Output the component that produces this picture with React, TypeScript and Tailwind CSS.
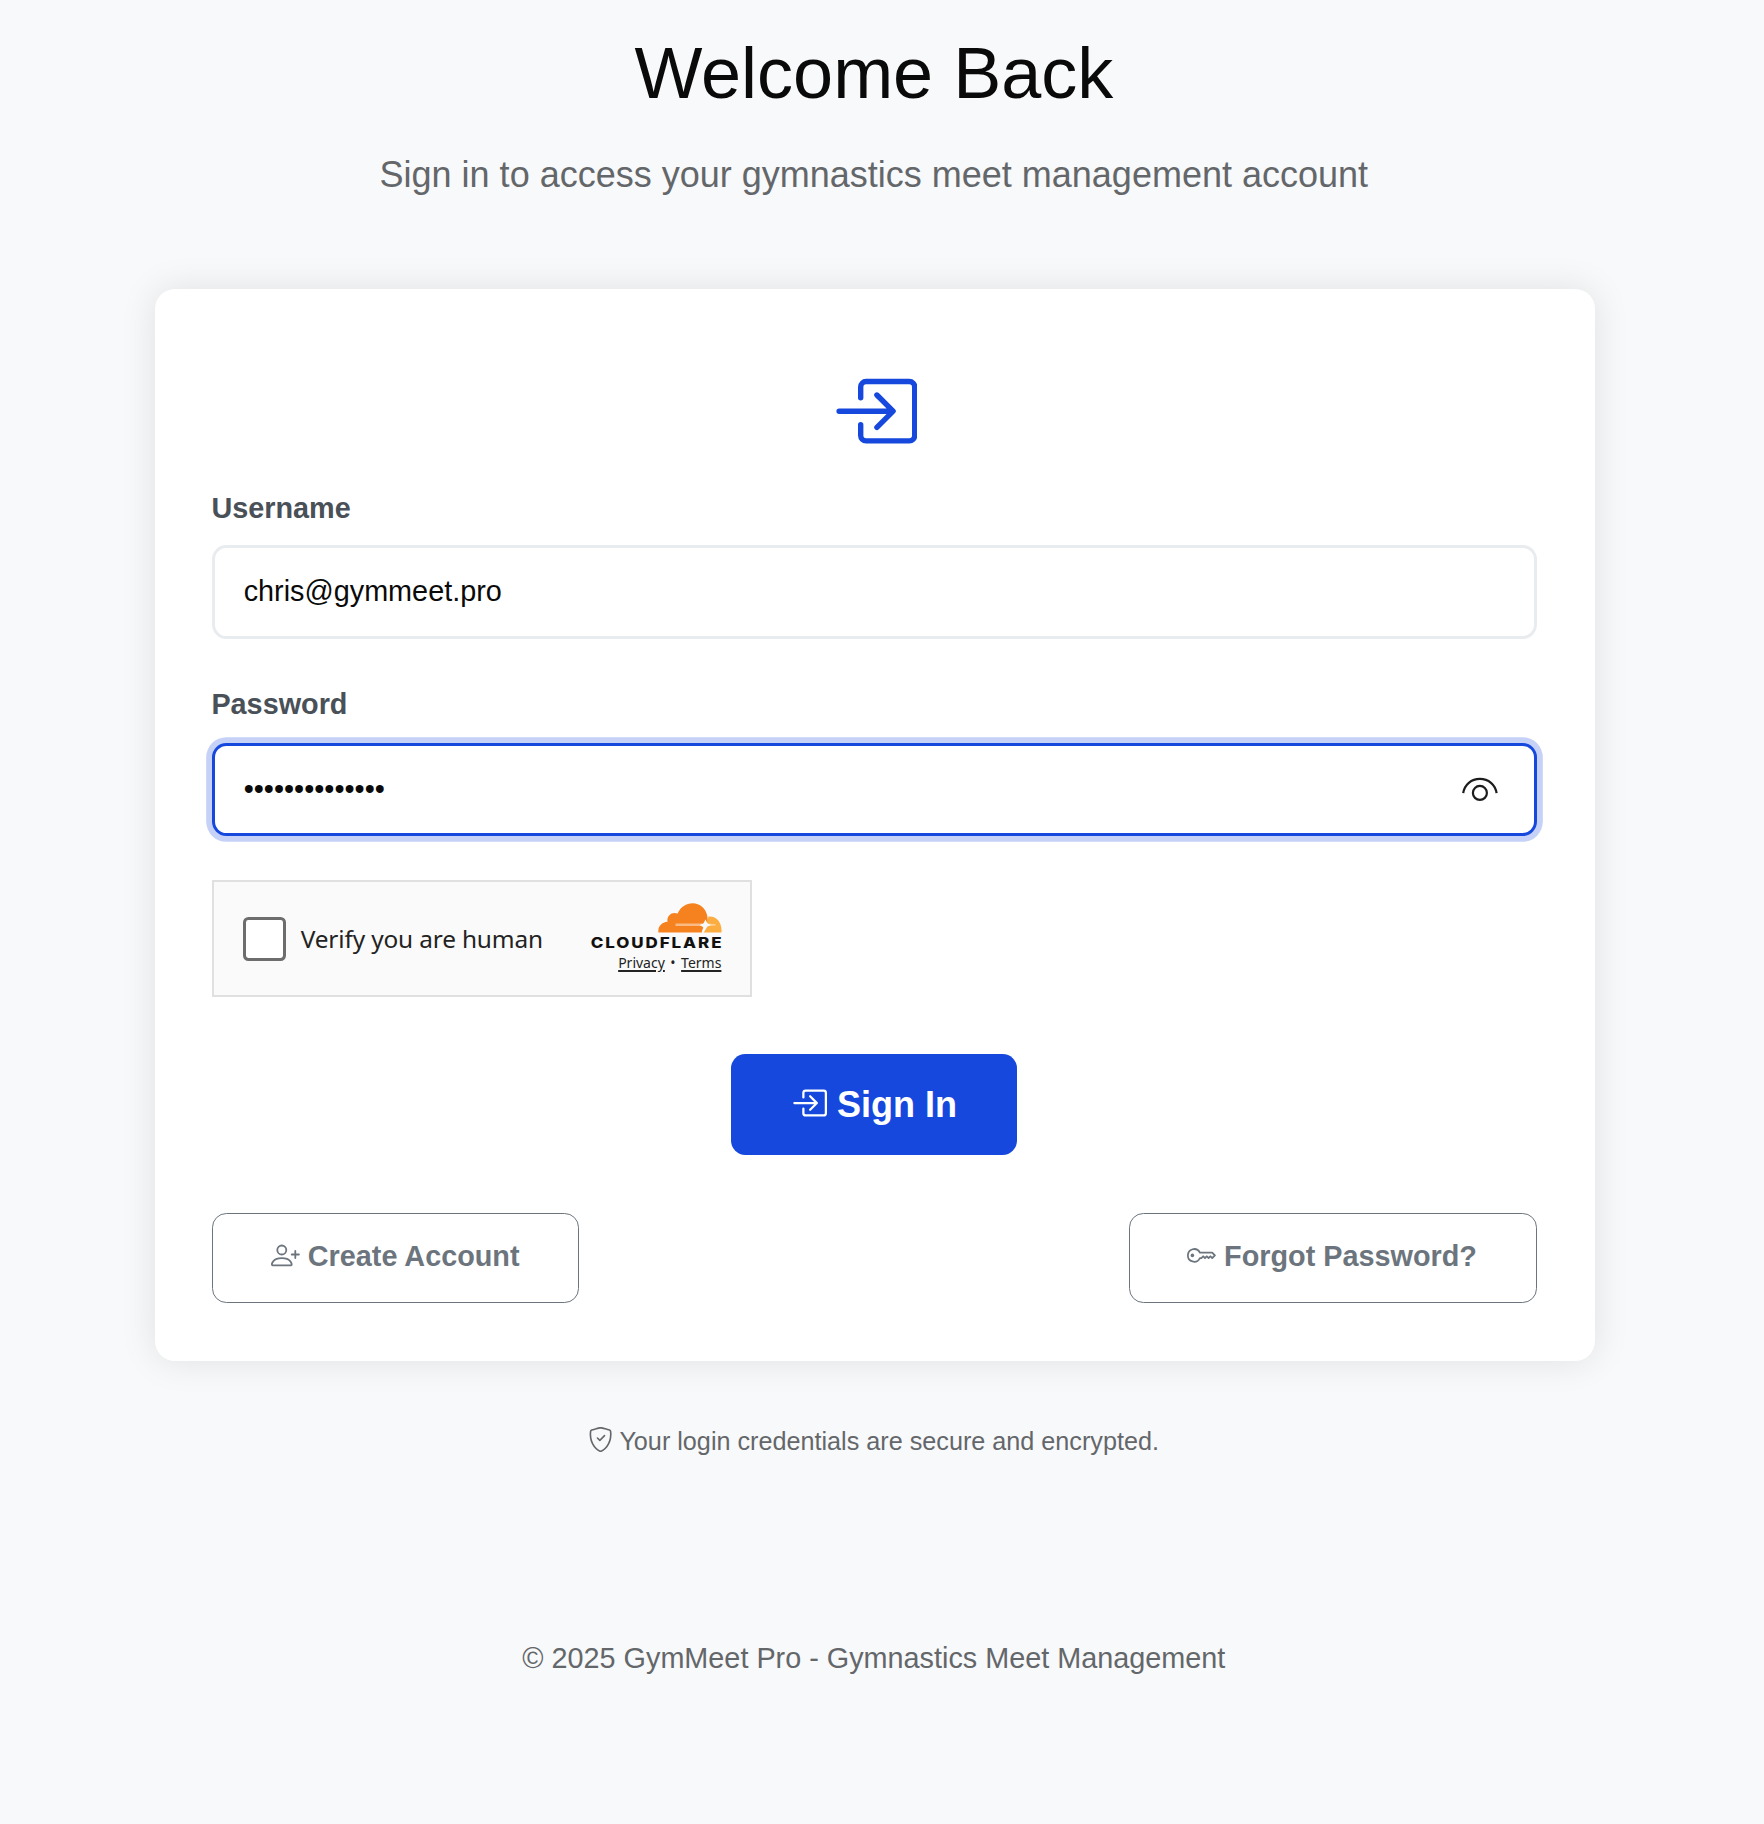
import { BsBoxArrowInRight, BsKey, BsPersonPlus, BsShieldCheck } from "react-icons/bs";

function RevealIcon() {
  return (
    <svg width="36" height="25" viewBox="0 0 36 25" fill="none" stroke="#1c1c1c" strokeWidth="2.2">
      <path d="M1.200 16.2C2.4 7.6 9.4 1.9 17.9 1.9S33.4 7.6 34.6 16.2" />
      <circle cx="17.9" cy="15.9" r="7" />
    </svg>
  );
}

function CloudLogo() {
  return (
    <svg width="64" height="30" viewBox="0 0 64 30">
      <path
        fill="#f6821f"
        d="M44 29.6H.4C-.3 23.500 3.500 19.300 9.500 18.700C8.600 12.900 13.600 8.300 19.600 10.600C22.600 3.900 28.300.3 34.600.3C42 .3 47.600 5.200 49.200 12.600L50 18.500L45.500 24.500Z"
      />
      <path
        fill="#fbad41"
        d="M50.500 13.500C58 12.500 64.400 19 63.500 29.600H45.500L47 24L49 19Z"
      />
      <path fill="#fff" fillOpacity="0.45" d="M17.500 20.600L44 20.400V23L17.500 22.900Z" />
      <path fill="#fff" fillOpacity="0.45" d="M49 20.600L57.500 21.200V22.400L49 23.100Z" />
      <path fill="#fafafa" d="M47.500 16.500L49.300 20.300L53 22L49.200 23.700L45.800 29.600H43.700L45.300 24.200L41.500 22L45.500 20.300Z" />
    </svg>
  );
}

export default function App() {
  return (
    <div className="min-h-[1824px] bg-[#f8f9fb] pr-[14.4px] pt-[29.5px] font-['Liberation_Sans',Arial,sans-serif] text-[28.8px] leading-[43.2px] text-[#0a0a0a]">
      <header className="pr-[2px] text-center">
        <h1 className="text-[72px] leading-[86.4px]">Welcome Back</h1>
        <p className="mt-[32.5px] text-[36px] leading-[54px] text-[#64676a]">
          Sign in to access your gymnastics meet management account
        </p>
      </header>

      <main className="mx-auto mt-[86.8px] flex h-[1071.4px] w-[1440px] flex-col rounded-[20px] bg-white px-[57.6px] shadow-[0_0_36px_rgba(0,0,0,0.1)]">
        <div className="mt-[79px] flex h-[86.4px] shrink-0 justify-center pr-[1.5px]">
          <BsBoxArrowInRight className="size-[86.4px] text-[#1648de]" />
        </div>

        <label className="-ml-px mt-[32px] font-bold text-[#495057]">Username</label>
        <input
          className="mt-[15.2px] h-[93.6px] shrink-0 rounded-[14.4px] border-[3px] border-[#e9ecef] bg-white px-[28.3px] outline-none"
          defaultValue="chris@gymmeet.pro"
        />

        <label className="-ml-px mt-[44.6px] font-bold text-[#495057]">Password</label>
        <div className="mt-[16.4px] flex h-[93.6px] shrink-0 items-center rounded-[14.4px] border-[3px] border-[#1648de] bg-white pl-[28.3px] pr-[36.4px] shadow-[0_0_0_5.8px_rgba(22,72,222,0.25)]">
          <input type="password" className="min-w-0 flex-1 outline-none" defaultValue="gymnastics2025" />
          <RevealIcon />
        </div>

        <section className="mt-[43.2px] flex h-[117px] w-[540px] shrink-0 items-center border-2 border-[#e0e0e0] bg-[#fafafa] pl-[28.8px] pr-[28px]">
          <div className="mt-[2px] size-[43.2px] rounded-[5.4px] border-[3px] border-[#6d6d6d] bg-white" />
          <span className="ml-[14.4px] mt-px whitespace-nowrap font-['Noto_Sans',sans-serif] text-[24.4px] leading-9 tracking-[-0.15px] text-[#232323]">
            Verify you are human
          </span>
          <div className="-mt-[2px] ml-auto flex flex-col items-end text-[#111]">
            <CloudLogo />
            <span className="mr-[-1.2px] mt-[3px] origin-right scale-x-[1.13] font-[Inter,sans-serif] text-[15px] font-extrabold leading-[14px] tracking-[1.7px]">
              CLOUDFLARE
            </span>
            <div className="mr-px mt-[4.5px] flex gap-[5.5px] font-['Noto_Sans',sans-serif] text-[14px] leading-[16px] text-[#232323]">
              <span className="underline decoration-[1.5px] underline-offset-2">Privacy</span>
              <span>•</span>
              <span className="underline decoration-[1.5px] underline-offset-2">Terms</span>
            </div>
          </div>
        </section>

        <div className="mt-[57.6px] flex shrink-0 justify-center pr-[1.8px]">
          <button className="flex h-[101px] w-[286px] items-center rounded-[14.4px] bg-[#1648de] pl-[60.5px] text-[36px] font-bold text-white">
            <BsBoxArrowInRight className="-mt-[4px] mr-[9.5px] size-[36px]" />
            Sign In
          </button>
        </div>

        <div className="mt-[57.6px] flex justify-between font-bold text-[#6c757d]">
          <button className="flex h-[90px] w-[367px] items-center rounded-[14.4px] border border-[#6c757d] pb-[2px] pl-[57.6px]">
            <BsPersonPlus className="-mt-[2px] mr-[8px] size-[28.8px]" />
            Create Account
          </button>
          <button className="flex h-[90px] w-[408.5px] items-center rounded-[14.4px] border border-[#6c757d] pb-[2px] pl-[57.6px]">
            <BsKey className="-mt-[2px] mr-[8px] size-[28.8px]" />
            Forgot Password?
          </button>
        </div>
      </main>

      <p className="mt-[61.5px] flex items-center justify-center pr-[3px] text-[25.2px] leading-[38px] text-[#64676a]">
        <BsShieldCheck className="-mt-[4px] mr-[6.5px] size-[25.2px]" />
        Your login credentials are secure and encrypted.
      </p>
      <footer className="mt-[177px] pr-[2px] text-center text-[#64676a]">
        © 2025 GymMeet Pro - Gymnastics Meet Management
      </footer>
    </div>
  );
}
